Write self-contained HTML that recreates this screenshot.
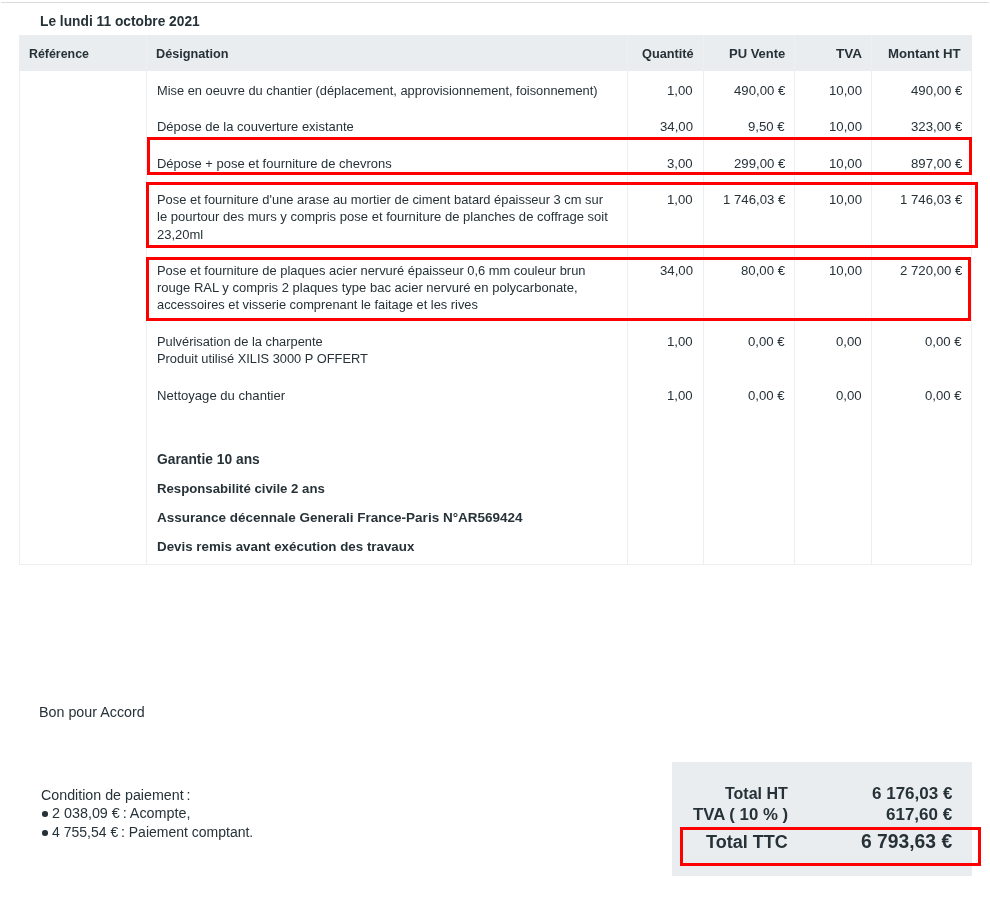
<!DOCTYPE html>
<html><head><meta charset="utf-8">
<style>
html,body{margin:0;padding:0;background:#fff;width:990px;height:900px;overflow:hidden;position:relative}
body{font-family:"Liberation Sans",sans-serif;color:#263238}
.a{position:absolute}
.t{position:absolute;white-space:pre;line-height:20px;font-size:12.85px;will-change:transform}
.b{font-weight:700}
.r{text-align:right}
.n{font-size:13.2px}
.ln{position:absolute;background:#eceff1}
.red{position:absolute;border:3px solid #ff0000;box-sizing:border-box}
</style></head><body>
<!-- top rule -->
<div class="a" style="left:1px;top:2px;width:988px;height:1px;background:#dcdcdc"></div>
<!-- date -->
<div class="t b" style="left:39.5px;top:11.5px;font-size:13.75px">Le lundi 11 octobre 2021</div>

<!-- table header bg -->
<div class="a" style="left:19px;top:35px;width:953px;height:36px;background:#eaedf0"></div>
<!-- header column dividers (lighter) -->
<div class="a" style="left:146px;top:35px;width:1px;height:36px;background:#eef1f3"></div>
<div class="a" style="left:627px;top:35px;width:1px;height:36px;background:#eef1f3"></div>
<div class="a" style="left:703px;top:35px;width:1px;height:36px;background:#eef1f3"></div>
<div class="a" style="left:794px;top:35px;width:1px;height:36px;background:#eef1f3"></div>
<div class="a" style="left:871px;top:35px;width:1px;height:36px;background:#eef1f3"></div>
<!-- body borders -->
<div class="ln" style="left:19px;top:71px;width:1px;height:494px"></div>
<div class="ln" style="left:971px;top:71px;width:1px;height:494px"></div>
<div class="ln" style="left:19px;top:564px;width:953px;height:1px"></div>
<div class="ln" style="left:146px;top:71px;width:1px;height:494px"></div>
<div class="ln" style="left:627px;top:71px;width:1px;height:494px"></div>
<div class="ln" style="left:703px;top:71px;width:1px;height:494px"></div>
<div class="ln" style="left:794px;top:71px;width:1px;height:494px"></div>
<div class="ln" style="left:871px;top:71px;width:1px;height:494px"></div>

<!-- header text -->
<div class="t b" style="left:29px;top:44px;font-size:12.4px">Référence</div>
<div class="t b" style="left:156px;top:44px;font-size:12.7px">Désignation</div>
<div class="t b r" style="right:296.5px;top:44px;font-size:12.75px">Quantité</div>
<div class="t b r" style="right:205px;top:44px;font-size:13px">PU Vente</div>
<div class="t b r" style="right:128px;top:44px;font-size:13.5px">TVA</div>
<div class="t b r" style="right:29px;top:44px;font-size:13.2px">Montant HT</div>

<!-- rows -->
<div class="t" style="left:157px;top:81px">Mise en oeuvre du chantier (déplacement, approvisionnement, foisonnement)</div>
<div class="t r n" style="right:297px;top:81px">1,00</div>
<div class="t r n" style="right:205px;top:81px">490,00 €</div>
<div class="t r n" style="right:128px;top:81px">10,00</div>
<div class="t r n" style="right:28px;top:81px">490,00 €</div>

<div class="t" style="left:157px;top:117px;font-size:12.98px">Dépose de la couverture existante</div>
<div class="t r n" style="right:297px;top:117px">34,00</div>
<div class="t r n" style="right:205px;top:117px">9,50 €</div>
<div class="t r n" style="right:128px;top:117px">10,00</div>
<div class="t r n" style="right:28px;top:117px">323,00 €</div>

<div class="t" style="left:157px;top:154px;font-size:12.98px">Dépose + pose et fourniture de chevrons</div>
<div class="t r n" style="right:297px;top:154px">3,00</div>
<div class="t r n" style="right:205px;top:154px">299,00 €</div>
<div class="t r n" style="right:128px;top:154px">10,00</div>
<div class="t r n" style="right:28px;top:154px">897,00 €</div>

<div class="t" style="left:157px;top:190px;font-size:12.9px">Pose et fourniture d'une arase au mortier de ciment batard épaisseur 3 cm sur</div>
<div class="t" style="left:157px;top:207.35px;font-size:13.05px">le pourtour des murs y compris pose et fourniture de planches de coffrage soit</div>
<div class="t" style="left:157px;top:224.7px;font-size:13px">23,20ml</div>
<div class="t r n" style="right:297px;top:190px">1,00</div>
<div class="t r n" style="right:205px;top:190px">1 746,03 €</div>
<div class="t r n" style="right:128px;top:190px">10,00</div>
<div class="t r n" style="right:28px;top:190px">1 746,03 €</div>

<div class="t" style="left:157px;top:261px;font-size:12.9px">Pose et fourniture de plaques acier nervuré épaisseur 0,6 mm couleur brun</div>
<div class="t" style="left:157px;top:278.1px;font-size:13.03px">rouge RAL y compris 2 plaques type bac acier nervuré en polycarbonate,</div>
<div class="t" style="left:157px;top:295.2px;font-size:12.83px">accessoires et visserie comprenant le faitage et les rives</div>
<div class="t r n" style="right:297px;top:261px">34,00</div>
<div class="t r n" style="right:205px;top:261px">80,00 €</div>
<div class="t r n" style="right:128px;top:261px">10,00</div>
<div class="t r n" style="right:28px;top:261px">2 720,00 €</div>

<div class="t" style="left:157px;top:333px;line-height:17.3px">Pulvérisation de la charpente
Produit utilisé XILIS 3000 P OFFERT</div>
<div class="t r n" style="right:297px;top:332px">1,00</div>
<div class="t r n" style="right:205px;top:332px">0,00 €</div>
<div class="t r n" style="right:128px;top:332px">0,00</div>
<div class="t r n" style="right:28px;top:332px">0,00 €</div>

<div class="t" style="left:157px;top:386px;font-size:13.1px">Nettoyage du chantier</div>
<div class="t r n" style="right:297px;top:386px">1,00</div>
<div class="t r n" style="right:205px;top:386px">0,00 €</div>
<div class="t r n" style="right:128px;top:386px">0,00</div>
<div class="t r n" style="right:28px;top:386px">0,00 €</div>

<!-- bold notes -->
<div class="t b" style="left:157px;top:450px;font-size:13.8px">Garantie 10 ans</div>
<div class="t b" style="left:157px;top:479px;font-size:13.2px">Responsabilité civile 2 ans</div>
<div class="t b" style="left:157px;top:508px;font-size:13.5px">Assurance décennale Generali France-Paris N°AR569424</div>
<div class="t b" style="left:157px;top:537px;font-size:13.35px">Devis remis avant exécution des travaux</div>

<!-- bon pour accord -->
<div class="t" style="left:39px;top:702px;font-size:14.3px">Bon pour Accord</div>

<!-- conditions -->
<div class="t" style="left:41px;top:785px;font-size:14.25px">Condition de paiement&#8201;:</div>
<div class="a" style="left:42px;top:811px;width:5.5px;height:5.5px;border-radius:50%;background:#263238"></div>
<div class="t" style="left:52px;top:803px;font-size:14.35px">2 038,09 €&#8201;: Acompte,</div>
<div class="a" style="left:42px;top:830.3px;width:5.5px;height:5.5px;border-radius:50%;background:#263238"></div>
<div class="t" style="left:52px;top:822px;font-size:14px">4 755,54 €&#8201;: Paiement comptant.</div>

<!-- totals box -->
<div class="a" style="left:672px;top:762px;width:300px;height:114px;background:#eaedf0"></div>
<div class="t b r" style="right:202px;top:784px;font-size:16px">Total HT</div>
<div class="t b r" style="right:38px;top:784px;font-size:17px">6 176,03 €</div>
<div class="t b r" style="right:202px;top:805px;font-size:16.8px">TVA ( 10 % )</div>
<div class="t b r" style="right:38px;top:805px;font-size:17px">617,60 €</div>
<div class="t b r" style="right:202px;top:832px;font-size:18px">Total TTC</div>
<div class="t b r" style="right:38px;top:832px;font-size:19.3px">6 793,63 €</div>

<!-- red annotation boxes -->
<div class="red" style="left:147px;top:137px;width:825px;height:38px"></div>
<div class="red" style="left:146px;top:182px;width:832px;height:66px"></div>
<div class="red" style="left:146px;top:257px;width:825px;height:64px"></div>
<div class="red" style="left:680px;top:827px;width:301px;height:39px"></div>
</body></html>
